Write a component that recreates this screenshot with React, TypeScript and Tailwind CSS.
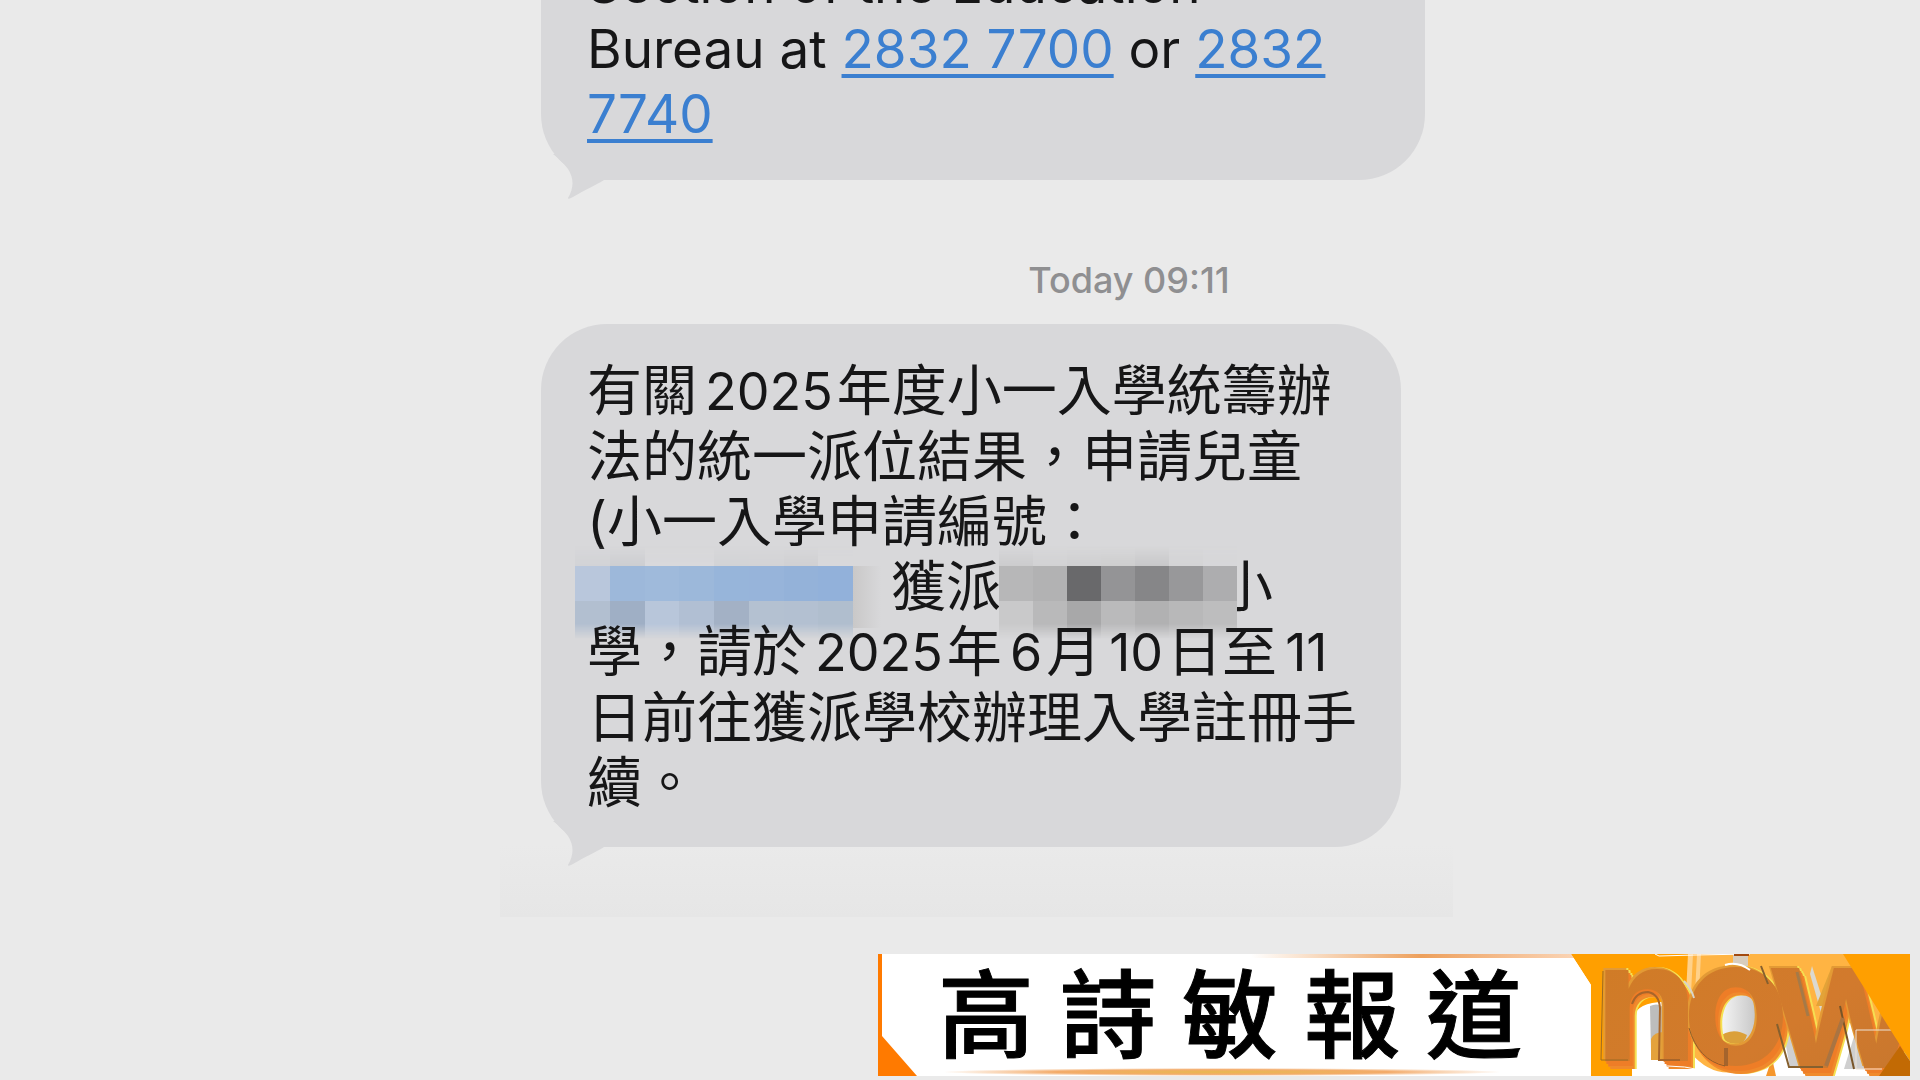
import type { ReactNode } from "react";

const blueCells = [
  ["bg-[#d2d3d6]", "bg-[#cdced1]", "bg-[#d9d9db]", "bg-[#d9d9db]", "bg-[#d2d3d5]", "bg-[#d3d3d5]", "bg-[#d0d0d2]", "bg-[#d8d8da]"],
  ["bg-[#b9c7dc]", "bg-[#9db8da]", "bg-[#9fbadb]", "bg-[#9cb8da]", "bg-[#97b5da]", "bg-[#97b4da]", "bg-[#94b2d9]", "bg-[#92b1da]"],
  ["bg-[#b2bfd0]", "bg-[#9fafc5]", "bg-[#b8c6da]", "bg-[#b1bfd3]", "bg-[#a3b1c5]", "bg-[#b4c1d1]", "bg-[#b3c0d1]", "bg-[#b0bece]"],
];

const grayCells = [
  ["bg-[#cccccd]", "bg-[#d2d2d3]", "bg-[#cfcfd0]", "bg-[#cecece]", "bg-[#c8c8c9]", "bg-[#d4d4d5]", "bg-[#d7d7d9]"],
  ["bg-[#b7b7b8]", "bg-[#b2b2b3]", "bg-[#69696b]", "bg-[#949496]", "bg-[#868688]", "bg-[#98989a]", "bg-[#adadaf]"],
  ["bg-[#c9c9ca]", "bg-[#b9b9ba]", "bg-[#a8a8a9]", "bg-[#bababb]", "bg-[#b1b1b2]", "bg-[#b8b8b9]", "bg-[#bdbdbe]"],
];

function Mosaic({ cells, className }: { cells: string[][]; className: string }) {
  return (
    <span aria-hidden="true" className={`absolute flex flex-col ${className}`}>
      {cells.map((row, r) => (
        <span key={r} className={`flex ${r === 0 ? "h-5 [mask-image:linear-gradient(to_top,black,transparent)]" : r === 1 ? "h-[35px]" : "h-[38px] [mask-image:linear-gradient(to_bottom,black_60%,transparent)]"}`}>
          {row.map((c, i) => (
            <span key={i} className={`flex-1 ${c}`} />
          ))}
        </span>
      ))}
    </span>
  );
}

function Tail() {
  return (
    <svg aria-hidden="true" viewBox="0 0 72 46" className="absolute -bottom-5 left-0 h-[46px] w-[72px] fill-[#d8d8da]">
      <path d="M12 0 C17 4 22 8 27 15 C33 24 33 34 27 44 Q27 46 32 43 C44 36 55 31 63 26 L72 26 L72 0 Z" />
    </svg>
  );
}

function Num({ children }: { children: ReactNode }) {
  return <span className="mr-1 ml-2 text-[52px]">{children}</span>;
}

function NowLogo() {
  return (
    <svg role="img" aria-label="now" viewBox="0 0 350 122" className="h-full w-[350px] shrink-0">
      <defs>
        <linearGradient id="face" x1="0" y1="0" x2="1" y2="1">
          <stop offset="0" stopColor="#cf7c24" />
          <stop offset="0.6" stopColor="#d27a2d" />
          <stop offset="1" stopColor="#c4762e" />
        </linearGradient>
        <linearGradient id="silver" x1="0" y1="0" x2="1" y2="0">
          <stop offset="0" stopColor="#ffffff" />
          <stop offset="1" stopColor="#c4c4c4" />
        </linearGradient>
        <clipPath id="panel">
          <path d="M11 0H350V122H31V31Z" />
        </clipPath>
      </defs>
      <g clipPath="url(#panel)">
        <path d="M11 0H350V122H31V31Z" fill="#ff9f00" />
        <path d="M128 0H285L350 107V122H128Z" fill="#ffb443" />
        <path d="M128 0H133L131 40H126ZM137 0H141L139 40H135Z" fill="#ffd18a" />
        <path d="M173 0H188V18H173Z" fill="#d8cdbd" />
        <path d="M95 0L99 2L135 1L190 0" fill="none" stroke="#fff" />
        <path d="M174 1H189" stroke="#a34a10" strokeWidth="2" />
        <path d="M72 122V66Q76 48 104 48V98Q118 92 130 100V122Z" fill="#fff" />
        <path d="M130 98Q150 122 175 118L200 116L216 90L300 66L350 110V122H130Z" fill="#fff" />
        <path d="M212 104L216 122H206Z" fill="#f5962c" />
        <path d="M90 52Q98 48 104 54V78L91 98Z" fill="#bdbdbd" />
        <path d="M91 85Q94 78 104 78V106H91Z" fill="#e4a23c" />
        <ellipse cx="176" cy="65" rx="22" ry="28" fill="url(#silver)" />
        <path d="M157 84Q172 72 187 81Q185 90 174 92Q164 91 157 84Z" fill="#dba03a" />
        <path d="M222 70L230 114H246L257 88ZM296 76L284 115H350V76Z" fill="#cfcfcf" />
        <path d="M250 20L262 62L264 50L252 12Z" fill="#dcd9cf" />
        <path d="M272 12L256 52H270L290 12Z" fill="#e2a338" />
        <g className="[filter:drop-shadow(-2px_-2px_0_#e39a35)_drop-shadow(3px_5px_0_#ee7d27)_drop-shadow(2px_3px_0_#f08a2c)_drop-shadow(2px_0_0_#f5e052)]">
          <text y="107" fontFamily="Inter, sans-serif" fontWeight="700" fontSize="166" fill="url(#face)">
            <tspan x="35">n</tspan>
            <tspan x="122" y="110" fontSize="176">o</tspan>
            <tspan x="208" y="114" fontSize="184">w</tspan>
          </text>
        </g>
        <path d="M165 11Q178 7 190 16" fill="none" stroke="#fff" strokeWidth="2" />
        <path d="M124 27Q131 34 134 44" fill="none" stroke="#d9d5c8" strokeWidth="2" />
        <path d="M43 17L41 106H68" fill="none" stroke="#9a6a24" strokeWidth="1" />
        <path d="M72 50Q76 38 88 38Q99 40 100 54L99 106H120" fill="none" stroke="#a8652a" strokeWidth="2" />
        <path d="M164 94H168V112H164Z" fill="#a5642c" />
        <path d="M129 74Q138 106 165 112" fill="none" stroke="#8f5f2b" strokeWidth="1" />
        <path d="M201 12L208 30M217 70L229 113H263" fill="none" stroke="#85602f" strokeWidth="2" />
        <path d="M237 18L248 62" stroke="#a57a48" strokeWidth="3" />
        <path d="M280 52L294 115" stroke="#795528" strokeWidth="2" />
        <path d="M283 64L266 112" stroke="#a97442" strokeWidth="4" />
        <path d="M91 113Q125 109 157 121M91 118Q125 114 150 121" fill="none" stroke="#fff" />
        <path d="M333 76H296V115H322" fill="none" stroke="#eee3d6" />
        <path d="M283 0H350V107Z" fill="#ff9f00" />
        <path d="M340 92L350 107V122H319Z" fill="#c26a04" />
      </g>
    </svg>
  );
}

export default function App() {
  return (
    <div className="flex min-h-screen flex-col overflow-hidden bg-[#eaeaea] font-[Inter,'Noto_Sans_CJK_TC',sans-serif]">
      <main className="mr-[467px] ml-[500px] flex flex-col items-start bg-[linear-gradient(to_bottom,transparent_92%,#e6e6e6)] pb-[70px] pl-[41px] text-[55px] leading-[65px] whitespace-nowrap text-[#161617]">
        <article className="relative -mt-[56px] w-[884px] rounded-b-[66px] bg-[#d8d8da] pt-2 pb-[33px] pl-[46px] text-[53px]">
          <p>Section of the Education</p>
          <p>
            Bureau at <a href="tel:28327700" className="text-[#3b7fd0] underline decoration-4 underline-offset-[6px]">2832 7700</a> or{" "}
            <a href="tel:28327740" className="text-[#3b7fd0] underline decoration-4 underline-offset-[6px]">2832<br />7740</a>
          </p>
          <Tail />
        </article>
        <time className="mt-[78px] w-[860px] pl-[316px] text-center text-[36px] leading-[44px] font-medium text-[#8f8f91]">Today 09:11</time>
        <article className="relative mt-[22px] w-[860px] rounded-[66px] bg-[#d8d8da] pt-[34px] pb-8 pl-[46px]">
          <p>有關<Num>2025</Num>年度小一入學統籌辦</p>
          <p>法的統一派位結果，申請兒童</p>
          <p>(小一入學申請編號：</p>
          <p className="relative">
            <span className="pl-[304px]">獲派</span>
            <span className="pl-[217px]">小</span>
            <Mosaic cells={blueCells} className="-left-3 -top-2 w-[278px]" />
            <span aria-hidden="true" className="absolute left-[266px] top-3 h-[62px] w-7 bg-linear-to-r from-[#c9c8c8] to-[#d8d8da]" />
            <Mosaic cells={grayCells} className="left-[412px] -top-2 w-[238px]" />
          </p>
          <p className="relative">學，請於<Num>2025</Num>年<Num>6</Num>月<Num>10</Num>日至<Num>11</Num></p>
          <p>日前往獲派學校辦理入學註冊手</p>
          <p>續。</p>
          <Tail />
        </article>
      </main>
      <footer className="mt-auto mr-[10px] mb-1 flex h-[122px] w-[1032px] self-end bg-white">
        <div className="relative flex flex-1 items-center bg-white">
          <svg aria-hidden="true" viewBox="0 0 39 122" className="h-full w-[39px]">
            <path d="M0 0H4V82L39 122H0Z" fill="#ff7a00" />
          </svg>
          <span aria-hidden="true" className="absolute right-0 top-0 h-1 w-[340px] bg-linear-to-r from-transparent via-[#eda05c] to-[#fbd9bd]" />
          <span aria-hidden="true" className="absolute bottom-0 left-16 h-2 w-[560px] bg-[radial-gradient(closest-side,#e8b84e,#f3ab6a_60%,transparent)]" />
          <h1 className="flex flex-1 pb-3 pl-[21px] font-['Noto_Sans_CJK_TC',sans-serif] text-[96px] leading-[110px] font-medium whitespace-nowrap text-black [-webkit-text-stroke:1px_black]">
            {"高詩敏報道".split("").map((c) => (
              <span key={c} className="w-[122px] shrink-0">{c}</span>
            ))}
          </h1>
        </div>
        <div className="relative -ml-[31px] flex w-[350px] shrink-0"><NowLogo /></div>
      </footer>
    </div>
  );
}
